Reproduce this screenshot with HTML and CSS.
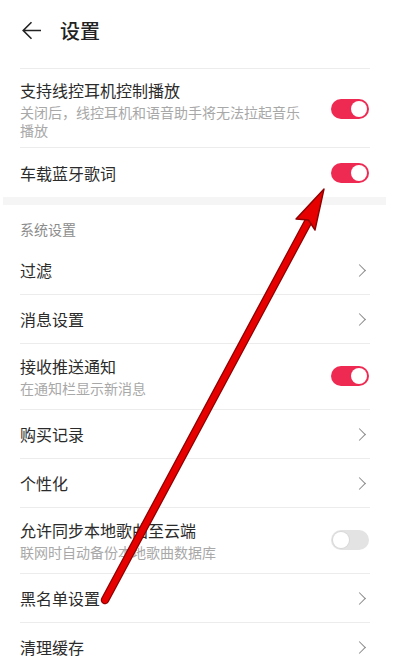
FILE: index.html
```html
<!DOCTYPE html>
<html lang="zh-CN">
<head>
<meta charset="utf-8">
<title>设置</title>
<link rel="stylesheet" href="styles.css">
</head>
<body>
<div class="page">
  <header class="header">
    <svg class="back" width="20" height="20" viewBox="0 0 20 20"><path d="M19 9.5H1.5M9.5 1.2L1.2 9.5l8.3 8.3" fill="none" stroke="#222" stroke-width="1.6"/></svg>
    <h1 class="title">设置</h1>
  </header>

  <div class="group">
    <div class="row three">
      <div class="text">
        <div class="label">支持线控耳机控制播放</div>
        <div class="sub">关闭后，线控耳机和语音助手将无法拉起音乐播放</div>
      </div>
      <span class="toggle on"></span>
    </div>
    <div class="row last">
      <div class="label">车载蓝牙歌词</div>
      <span class="toggle on"></span>
    </div>
  </div>

  <div class="band"></div>

  <div class="section">系统设置</div>

  <div class="group plain">
    <div class="row"><div class="label">过滤</div><span class="chev"></span></div>
    <div class="row"><div class="label">消息设置</div><span class="chev"></span></div>
    <div class="row two">
      <div class="text">
        <div class="label">接收推送通知</div>
        <div class="sub">在通知栏显示新消息</div>
      </div>
      <span class="toggle on"></span>
    </div>
    <div class="row"><div class="label">购买记录</div><span class="chev"></span></div>
    <div class="row"><div class="label">个性化</div><span class="chev"></span></div>
    <div class="row two">
      <div class="text">
        <div class="label">允许同步本地歌曲至云端</div>
        <div class="sub">联网时自动备份本地歌曲数据库</div>
      </div>
      <span class="toggle"></span>
    </div>
    <div class="row"><div class="label">黑名单设置</div><span class="chev"></span></div>
    <div class="row"><div class="label">清理缓存</div><span class="chev"></span></div>
  </div>
</div>

<svg class="pointer" width="407" height="660" viewBox="0 0 407 660">
  <line x1="105" y1="600" x2="308" y2="222" stroke="#8e0000" stroke-width="8.5" stroke-linecap="round"/>
  <line x1="105" y1="600" x2="308" y2="222" stroke="#e60000" stroke-width="6" stroke-linecap="round"/>
  <polygon points="324,189 315,230 308.5,220 296,219" fill="#e60000" stroke="#8e0000" stroke-width="1.4" stroke-linejoin="round"/>
</svg>
</body>
</html>
```

FILE: styles.css
```css
* { box-sizing: border-box; }

body {
  margin: 0;
  background: #fff;
  font-family: "Noto Sans CJK SC", "Noto Sans", sans-serif;
  color: #2b2b2b;
  width: 407px;
  height: 660px;
  overflow: hidden;
  position: relative;
}

.page {
  width: 390px;
}

.header {
  height: 60px;
  display: flex;
  align-items: center;
  padding-left: 22px;
  padding-top: 1px;
}

.back {
  display: block;
  width: 20px;
  height: 20px;
}

.title {
  margin: 0 0 0 18px;
  font-size: 20px;
  font-weight: 500;
  line-height: 28px;
  color: #222;
}

.group {
  margin: 8px 20px 0 20px;
  border-top: 1px solid #ececec;
}

.group.plain {
  margin-top: 0;
  border-top: 0;
}

.row {
  display: flex;
  align-items: center;
  justify-content: space-between;
  height: 49px;
  border-bottom: 1px solid #ececec;
}

.row.last {
  border-bottom: 0;
}

.row.two {
  height: 66px;
  padding: 11px 0 12px;
}

.row.three {
  height: 79px;
  padding: 10px 0 8px;
}

.text {
  display: flex;
  flex-direction: column;
  gap: 2px;
}

.label {
  font-size: 16px;
  line-height: 22px;
  color: #2b2b2b;
}

.sub {
  font-size: 14px;
  line-height: 18px;
  color: #a8a8a8;
}

.three .text {
  width: 290px;
}

.toggle {
  flex: none;
  width: 38px;
  height: 20px;
  border-radius: 10px;
  background: #e3e3e3;
  position: relative;
  margin-right: 1px;
}

.toggle::after {
  content: "";
  position: absolute;
  top: 2px;
  left: 2px;
  width: 16px;
  height: 16px;
  border-radius: 50%;
  background: #fff;
  box-shadow: 0 0 0 1px #d8d8d8;
}

.toggle.on {
  background: #ef2a52;
}

.toggle.on::after {
  left: auto;
  right: 2px;
  box-shadow: none;
}

.chev {
  flex: none;
  width: 9px;
  height: 9px;
  border-top: 1.4px solid #8a8a8a;
  border-right: 1.4px solid #8a8a8a;
  transform: rotate(45deg);
  margin-right: 6px;
}

.band {
  height: 8px;
  margin: 0 4px 0 3px;
  background: #f5f5f5;
}

.section {
  height: 41px;
  padding: 14px 20px 0;
  font-size: 14px;
  line-height: 20px;
  color: #8c8c8c;
}

.pointer {
  position: absolute;
  left: 0;
  top: 0;
  pointer-events: none;
}
```
